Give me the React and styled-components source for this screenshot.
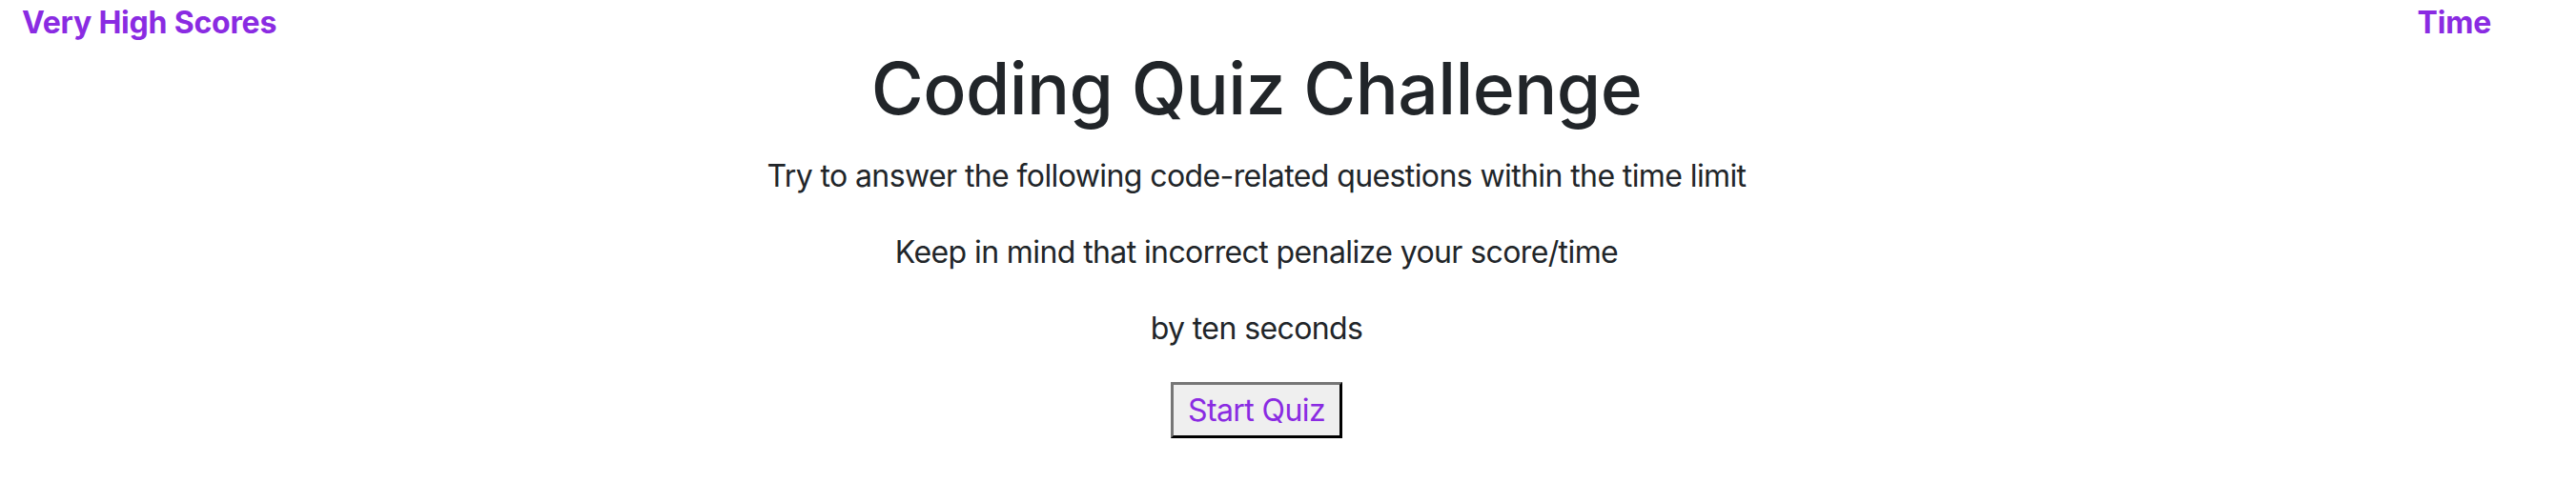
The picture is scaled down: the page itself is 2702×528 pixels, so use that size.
import React from 'react'
import styled, { createGlobalStyle } from 'styled-components'

const GlobalStyle = createGlobalStyle`
  html, body {
    margin: 0;
    padding: 0;
    background: #ffffff;
  }
  body {
    font-family: Inter, "Noto Sans", sans-serif;
    color: #212529;
  }
`

const Header = styled.header`
  display: flex;
  justify-content: space-between;
  align-items: center;
  padding: 0 89px 0 23px;
  height: 46px;
`

const NavLink = styled.a`
  font-size: 32px;
  font-weight: 700;
  letter-spacing: -0.2px;
  color: #8a2be2;
  text-decoration: none;
  cursor: pointer;
`

const Main = styled.main`
  display: flex;
  flex-direction: column;
  align-items: center;
  padding-right: 66px;
`

const Title = styled.h1`
  margin: 2px 0 23px;
  font-size: 75px;
  font-weight: 500;
  line-height: 1.2;
  letter-spacing: -0.6px;
`

const Text = styled.p`
  margin: 0 0 32px;
  font-size: 32px;
  line-height: 48px;
  letter-spacing: -0.6px;
`

const StartButton = styled.button`
  font-family: inherit;
  font-size: 32px;
  line-height: 38px;
  letter-spacing: -0.6px;
  color: #8a2be2;
  background: #efefef;
  border: 3px outset #767676;
  border-color: #767676 #1f1f1f #1f1f1f #767676;
  padding: 7.5px 15px;
  cursor: pointer;
`

export default function App() {
  return (
    <>
      <GlobalStyle />
      <Header>
        <NavLink>Very High Scores</NavLink>
        <NavLink>Time</NavLink>
      </Header>
      <Main>
        <Title>Coding Quiz Challenge</Title>
        <Text>Try to answer the following code-related questions within the time limit</Text>
        <Text>Keep in mind that incorrect penalize your score/time</Text>
        <Text>by ten seconds</Text>
        <StartButton>Start Quiz</StartButton>
      </Main>
    </>
  )
}
